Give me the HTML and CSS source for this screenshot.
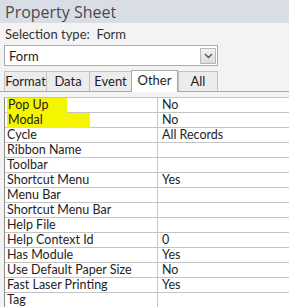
FILE: index.html
```html
<!DOCTYPE html>
<html lang="en">
<head>
    <meta charset="UTF-8">
    <title>Property Sheet</title>
    <link rel="stylesheet" href="styles.css">
</head>
<body>
    <div class="title">Property Sheet</div>
    <div class="selection">Selection type:&nbsp; Form</div>

    <div class="combo">
        <span class="combo-text">Form</span>
        <span class="combo-btn">
            <svg width="9" height="6" viewBox="0 0 9 6"><path d="M1 1 L4.5 4.5 L8 1" fill="none" stroke="#555" stroke-width="1.4"/></svg>
        </span>
    </div>

    <div class="tabs">
        <span class="tab tab-format">Format</span>
        <span class="tab tab-data">Data</span>
        <span class="tab tab-event">Event</span>
        <span class="tab tab-other active">Other</span>
        <span class="tab tab-all">All</span>
    </div>

    <div class="grid">
        <div class="row"><span class="name"><span class="mark mark-a">Pop Up</span></span><span class="value">No</span></div>
        <div class="row"><span class="name"><span class="mark mark-b">Modal</span></span><span class="value">No</span></div>
        <div class="row"><span class="name">Cycle</span><span class="value">All Records</span></div>
        <div class="row"><span class="name">Ribbon Name</span><span class="value"></span></div>
        <div class="row"><span class="name">Toolbar</span><span class="value"></span></div>
        <div class="row"><span class="name">Shortcut Menu</span><span class="value">Yes</span></div>
        <div class="row"><span class="name">Menu Bar</span><span class="value"></span></div>
        <div class="row"><span class="name">Shortcut Menu Bar</span><span class="value"></span></div>
        <div class="row"><span class="name">Help File</span><span class="value"></span></div>
        <div class="row"><span class="name">Help Context Id</span><span class="value">0</span></div>
        <div class="row"><span class="name">Has Module</span><span class="value">Yes</span></div>
        <div class="row"><span class="name">Use Default Paper Size</span><span class="value">No</span></div>
        <div class="row"><span class="name">Fast Laser Printing</span><span class="value">Yes</span></div>
        <div class="row"><span class="name">Tag</span><span class="value"></span></div>
    </div>
</body>
</html>
```

FILE: styles.css
```css
body {
    margin: 0;
    padding: 0;
    background-color: #f3f3f3;
    font-family: Lato, "Open Sans", sans-serif;
    color: #1e1e1e;
    overflow: hidden;
}
.title {
    height: 23px;
    background-color: #d9dee6;
    color: #4a4a4a;
    font-family: "Open Sans", sans-serif;
    font-size: 16px;
    line-height: 25px;
    padding-left: 5px;
}
.selection {
    height: 22px;
    font-size: 13px;
    line-height: 16px;
    padding: 3px 0 0 5px;
    color: #333;
    box-sizing: border-box;
}
.combo {
    margin: 0 0 0 4px;
    width: 214px;
    height: 21px;
    box-sizing: border-box;
    border: 1px solid #ababab;
    background-color: #fff;
    display: flex;
    align-items: center;
    justify-content: space-between;
    padding: 0 1px 0 4px;
    font-size: 13px;
}
.combo-btn {
    width: 16px;
    height: 16px;
    border: 1px solid #b8b8b8;
    background: linear-gradient(#f2f2f2, #dcdcdc);
    display: flex;
    align-items: center;
    justify-content: center;
    box-sizing: border-box;
}
.tabs {
    display: flex;
    align-items: flex-end;
    height: 26px;
    padding-left: 4px;
    border-bottom: 1px solid #a9a9a9;
    box-sizing: border-box;
    font-size: 13px;
}
.tab {
    height: 20px;
    box-sizing: border-box;
    border: 1px solid #c2c2c2;
    border-bottom: none;
    background-color: #ececec;
    text-align: center;
    line-height: 19px;
    margin-right: -1px;
}
.tab-format { width: 43px; }
.tab-data { width: 44px; }
.tab-event { width: 43px; }
.tab-other { width: 47px; }
.tab-all { width: 40px; margin-left: 1px; }
.tab.active {
    height: 22px;
    background-color: #fff;
    line-height: 19px;
    position: relative;
    top: 1px;
    border-color: #a9a9a9;
}
.grid {
    margin: 5px 0 0 4px;
    background-color: #fff;
    border-left: 1px solid #8c8c8c;
    font-size: 12.5px;
}
.row {
    display: flex;
    height: 15px;
    box-sizing: border-box;
    border-top: 1px solid #c4c4c4;
    line-height: 14px;
    white-space: nowrap;
}
.name {
    width: 153px;
    flex-shrink: 0;
    box-sizing: border-box;
    padding-left: 2px;
    border-right: 1px solid #c4c4c4;
}
.value {
    padding-left: 4px;
}
.mark {
    display: inline-block;
    background-color: #f6f500;
    padding: 0 2px 1px 1px;
}
.mark-a { padding-right: 19px; }
.mark-b { padding-right: 47px; }
```
